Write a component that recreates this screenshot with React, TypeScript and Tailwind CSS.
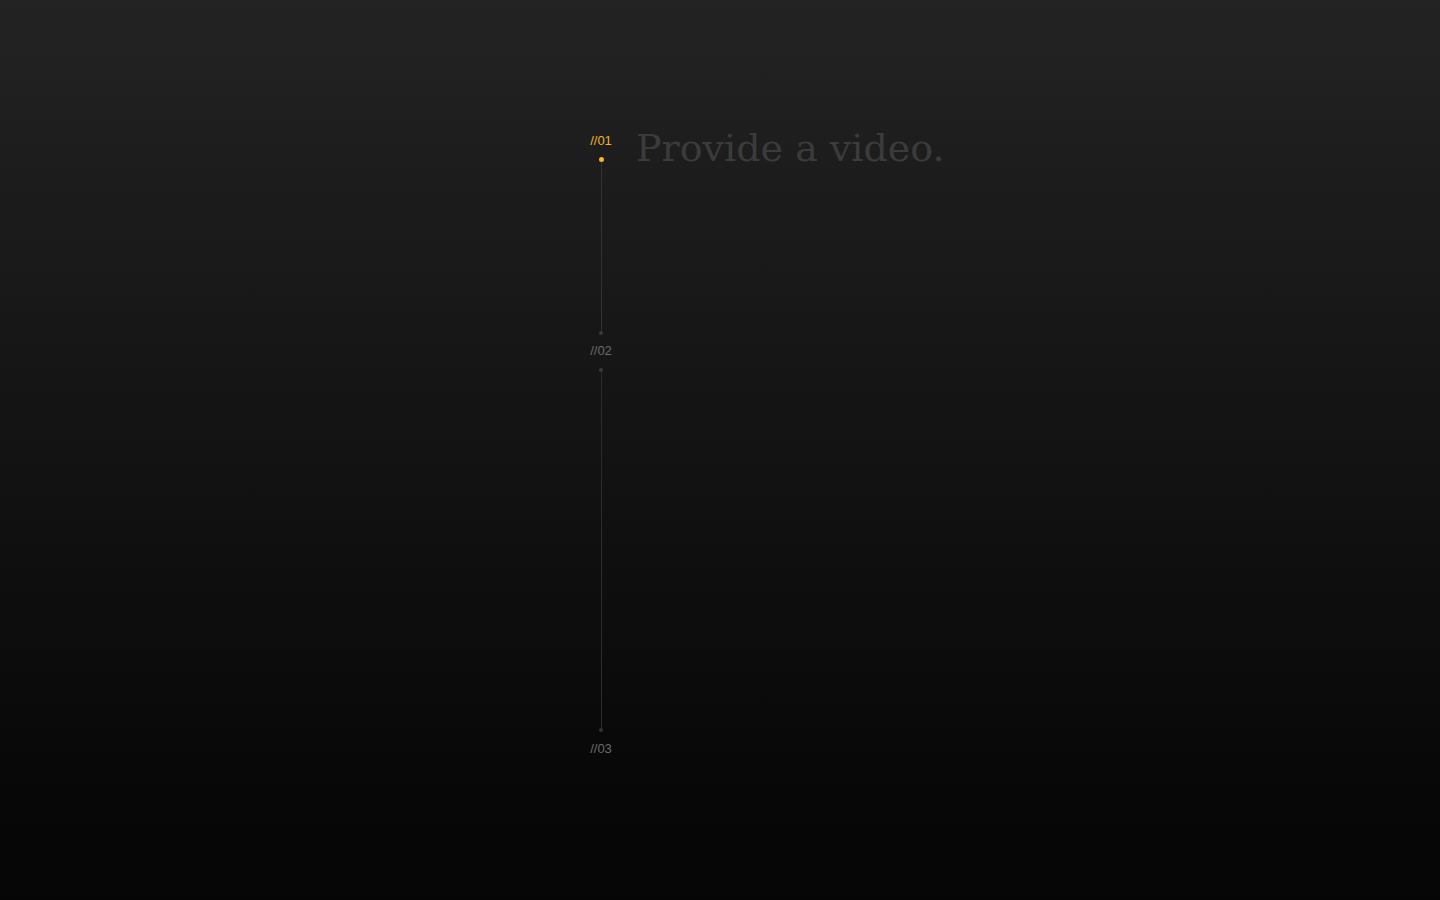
export default function App() {
  return (
    <main className="min-h-screen w-full bg-gradient-to-b from-[#232323] to-[#050505] pt-[133px] pl-[588px] font-['Liberation_Sans',sans-serif]">
      <div className="flex items-start gap-[22px]">
        <div className="flex w-[26px] flex-col items-center">
          <Label text="//01" active />
          <div className="mt-[8px] h-[5px] w-[5px] rounded-full bg-[#f2b631]" />
          <div className="h-[169px] w-px bg-[#333333]" />
          <div className="h-[4px] w-[4px] rounded-full bg-[#3a3a3a]" />
          <div className="mt-[8px]">
            <Label text="//02" />
          </div>
          <div className="mt-[9px] h-[4px] w-[4px] rounded-full bg-[#3a3a3a]" />
          <div className="h-[356px] w-px bg-[#2c2c2c]" />
          <div className="h-[4px] w-[4px] rounded-full bg-[#333333]" />
          <div className="mt-[9px]">
            <Label text="//03" />
          </div>
        </div>

        <div className="-mt-[9px]">
          <h1 className="font-['DejaVu_Serif',serif] text-[38px] leading-[48px] text-[#3b3b3b]">
            Provide a video.
          </h1>
        </div>
      </div>
    </main>
  );
}

function Label({ text, active }: { text: string; active?: boolean }) {
  return (
    <div
      className={
        "text-[13px] leading-[16px] whitespace-nowrap " +
        (active ? "text-[#f0b429]" : "text-[#6b6b6b]")
      }
    >
      {text}
    </div>
  );
}
